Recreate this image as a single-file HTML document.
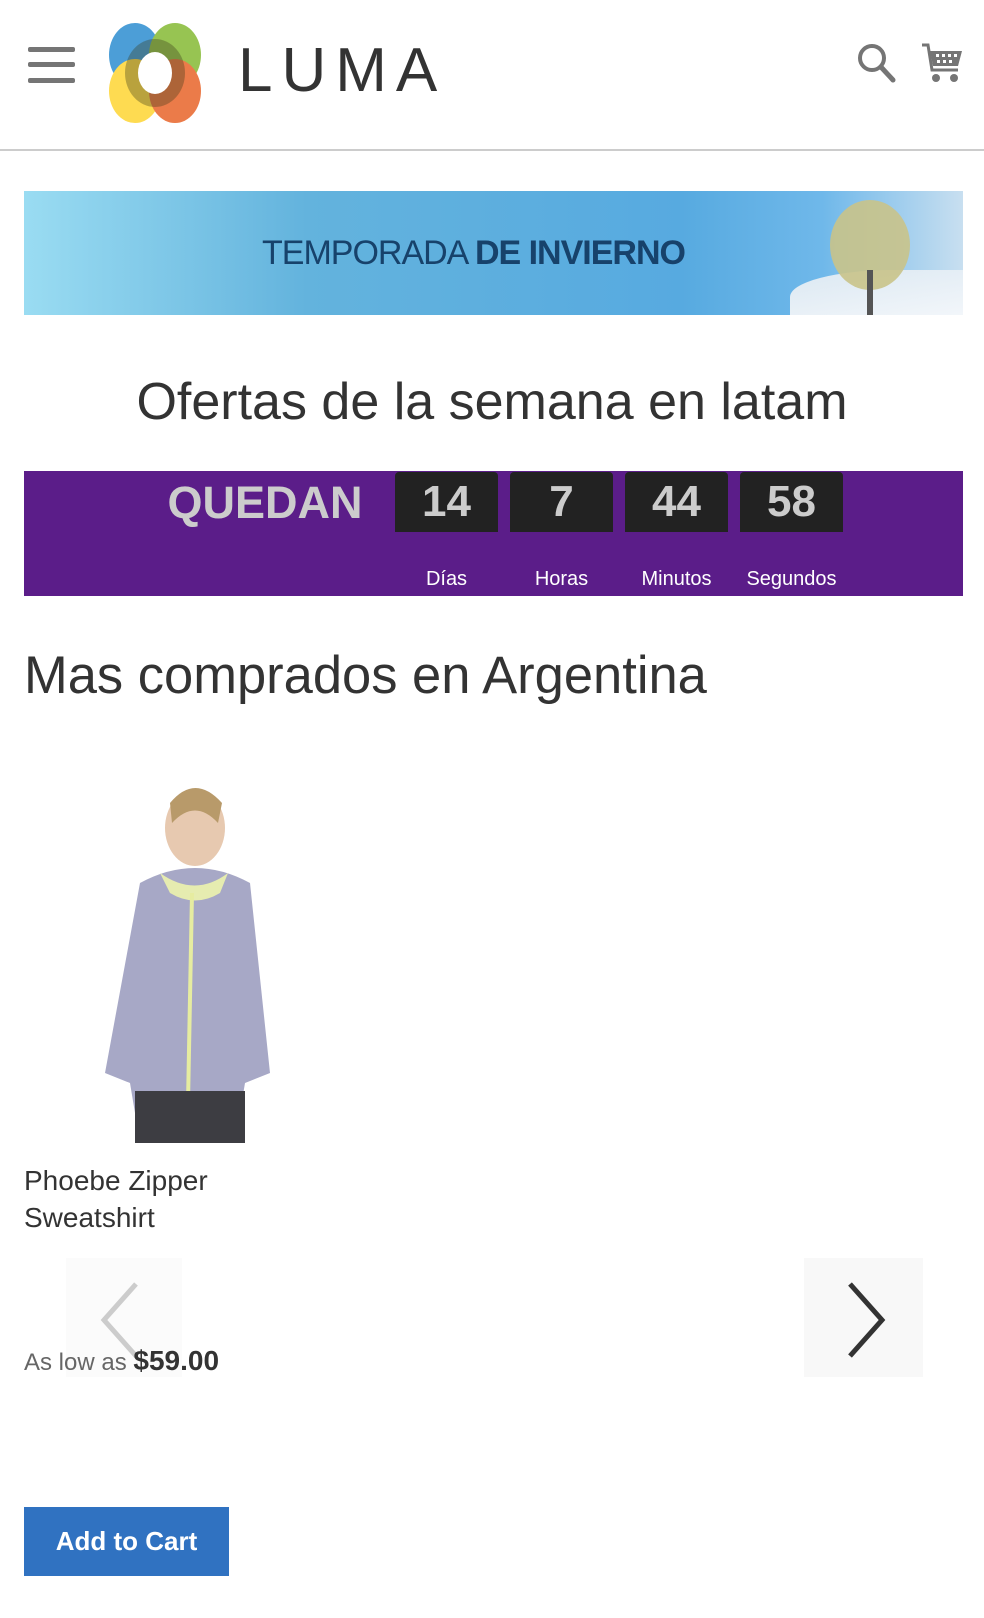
<!DOCTYPE html>
<html><head><meta charset="utf-8"><style>
*{margin:0;padding:0;box-sizing:border-box}
body{width:984px;height:1618px;background:#fff;font-family:"Liberation Sans","DejaVu Sans",sans-serif;color:#333;position:relative;overflow:hidden}
.a{position:absolute}
.hb{left:28px;width:47px;height:5px;background:#757575;border-radius:2px}
.box{background:#222;color:#ccc;font-weight:bold;font-size:44px;text-align:center;line-height:60px;top:472px;height:60px;width:103px;border-radius:4px 4px 0 0}
.lbl{color:#fff;font-size:20px;top:568px;width:103px;text-align:center}
</style></head><body>
<div class="a hb" style="top:47px"></div>
<div class="a hb" style="top:62px"></div>
<div class="a hb" style="top:78px"></div>
<svg class="a" style="left:105px;top:23px" width="100" height="100" viewBox="0 0 100 100">
<g opacity="0.85">
<ellipse cx="30" cy="32" rx="26" ry="32" fill="#2d8ed1"/>
<ellipse cx="70" cy="32" rx="26" ry="32" fill="#85ba35"/>
<ellipse cx="30" cy="68" rx="26" ry="32" fill="#fed533"/>
<ellipse cx="70" cy="68" rx="26" ry="32" fill="#e8642a"/>
</g>
<ellipse cx="50" cy="50" rx="30" ry="34" fill="#3a3a1a" opacity="0.35"/>
<ellipse cx="50" cy="50" rx="17" ry="21" fill="#fff"/>
</svg>
<div class="a" style="left:238px;top:36px;font-size:62px;letter-spacing:9px;color:#333;line-height:70px">LUMA</div>
<svg class="a" style="left:856px;top:42px" width="42" height="42" viewBox="0 0 42 42"><circle cx="16" cy="16" r="12" fill="none" stroke="#757575" stroke-width="4"/><line x1="25" y1="25" x2="37" y2="38" stroke="#757575" stroke-width="5" stroke-linecap="round"/></svg>
<svg class="a" style="left:920px;top:42px" width="44" height="44" viewBox="0 0 44 44"><path d="M2 3 L8 3 L12 28 L38 28" fill="none" stroke="#757575" stroke-width="3"/><path d="M10 9 L42 9 L38 24 L13 24Z" fill="#757575"/><g fill="#fff"><rect x="16" y="12" width="3" height="3"/><rect x="22" y="12" width="3" height="3"/><rect x="28" y="12" width="3" height="3"/><rect x="34" y="12" width="3" height="3"/><rect x="17" y="18" width="3" height="3"/><rect x="23" y="18" width="3" height="3"/><rect x="29" y="18" width="3" height="3"/></g><circle cx="16" cy="36" r="4" fill="#757575"/><circle cx="34" cy="36" r="4" fill="#757575"/></svg>
<div class="a" style="left:0;top:149px;width:984px;height:2px;background:#ccc"></div>
<div class="a" style="left:24px;top:191px;width:939px;height:124px;background:linear-gradient(90deg,#9adcf2 0%,#63b3dd 30%,#57aae0 70%,#6fb8ea 85%,#c8dff0 100%)"></div>
<div class="a" style="left:790px;top:270px;width:173px;height:45px;background:linear-gradient(170deg,#dbe8f2,#f2f6fa);border-radius:60% 0 0 0"></div>
<div class="a" style="left:830px;top:200px;width:80px;height:90px;border-radius:50%;background:#c9c38a;opacity:.9"></div>
<div class="a" style="left:867px;top:270px;width:6px;height:45px;background:#555"></div>
<div class="a" style="left:262px;top:231px;font-size:34px;color:#17426b;letter-spacing:-1px;line-height:44px">TEMPORADA <b>DE INVIERNO</b></div>
<div class="a" style="left:0;width:984px;top:371px;text-align:center;font-size:52px;line-height:62px;color:#333">Ofertas de la semana en latam</div>
<div class="a" style="left:24px;top:471px;width:939px;height:125px;background:#5b1d89"></div>
<div class="a" style="left:165px;top:475px;width:200px;font-size:45px;font-weight:bold;color:#ccc;line-height:56px;text-align:center">QUEDAN</div>
<div class="a box" style="left:395px">14</div>
<div class="a box" style="left:510px">7</div>
<div class="a box" style="left:625px">44</div>
<div class="a box" style="left:740px">58</div>
<div class="a lbl" style="left:395px">Días</div>
<div class="a lbl" style="left:510px">Horas</div>
<div class="a lbl" style="left:625px">Minutos</div>
<div class="a lbl" style="left:740px">Segundos</div>
<div class="a" style="left:24px;top:645px;font-size:52.5px;line-height:62px;color:#333">Mas comprados en Argentina</div>
<svg class="a" style="left:100px;top:773px" width="180" height="370" viewBox="0 0 180 370">
<ellipse cx="95" cy="55" rx="30" ry="38" fill="#e7c9b0"/>
<path d="M70 30 Q95 0 122 30 L118 50 Q95 25 72 50Z" fill="#b89a6a"/>
<path d="M40 110 Q95 80 150 110 L170 300 L145 310 L140 340 L35 340 L30 310 L5 300Z" fill="#a7a8c6"/>
<path d="M60 100 Q95 125 128 100 L120 120 Q95 135 70 120Z" fill="#e6ecb0"/>
<line x1="92" y1="120" x2="88" y2="330" stroke="#e6eca0" stroke-width="4"/>
<rect x="35" y="318" width="110" height="52" fill="#3d3d42"/>
</svg>
<div class="a" style="left:24px;top:1162px;font-size:28px;line-height:37px;color:#333">Phoebe Zipper<br>Sweatshirt</div>
<div class="a" style="left:66px;top:1258px;width:116px;height:119px;background:#f8f8f8;opacity:.6"></div>
<svg class="a" style="left:96px;top:1280px" width="50" height="80" viewBox="0 0 50 80"><path d="M40 4 L8 40 L40 76" fill="none" stroke="#ccc" stroke-width="5"/></svg>
<div class="a" style="left:804px;top:1258px;width:119px;height:119px;background:#f8f8f8"></div>
<svg class="a" style="left:840px;top:1280px" width="50" height="80" viewBox="0 0 50 80"><path d="M10 4 L42 40 L10 76" fill="none" stroke="#333" stroke-width="5"/></svg>
<div class="a" style="left:24px;top:1344px;font-size:24px;line-height:34px;color:#666">As low as <b style="color:#333;font-size:28px">$59.00</b></div>
<div class="a" style="left:24px;top:1507px;width:205px;height:69px;background:#3072c1;color:#fff;font-size:26px;font-weight:bold;text-align:center;line-height:69px">Add to Cart</div>
</body></html>
